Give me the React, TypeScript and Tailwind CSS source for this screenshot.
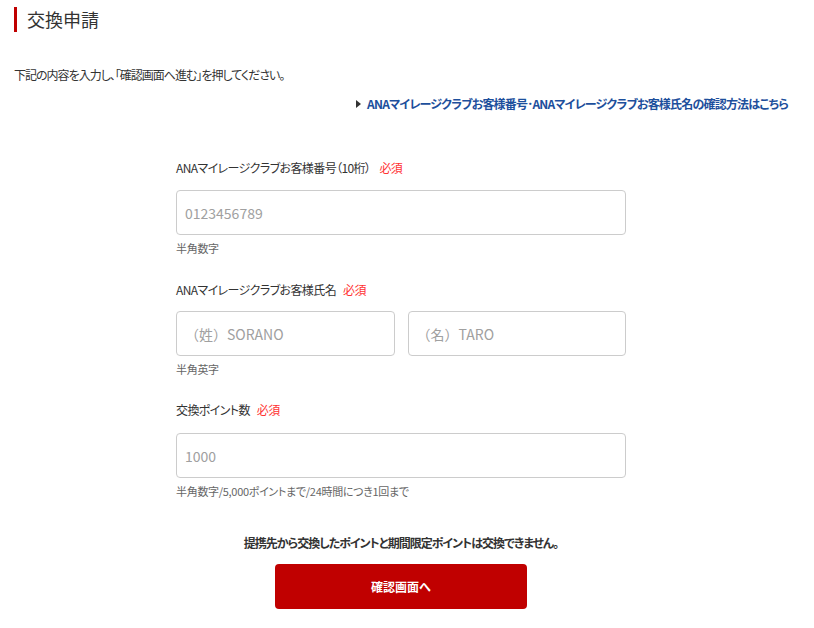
import React from 'react'

const font = "[font-family:'Noto_Sans_CJK_JP','Noto_Sans',sans-serif]"

function Label({ text }: { text: string }) {
  return (
    <div className="text-[12px] leading-[18px] tracking-[-0.6px] text-[#333] [font-feature-settings:'palt']">
      {text}
      <span className="ml-[7px] text-[#ff3333]">必須</span>
    </div>
  )
}

function Field({ placeholder, className = '' }: { placeholder: string; className?: string }) {
  return (
    <input
      type="text"
      placeholder={placeholder}
      className={`h-[45px] w-full rounded-[4px] border border-[#cccccc] bg-white px-2 text-[14px] text-[#333] outline-none placeholder:text-[#a0a0a0] ${className}`}
    />
  )
}

function Help({ text }: { text: string }) {
  return (
    <div className="mt-[5px] text-[11px] leading-[16px] tracking-[-0.3px] text-[#666] [font-feature-settings:'palt']">
      {text}
    </div>
  )
}

export default function App() {
  return (
    <div className={`min-h-screen bg-white pl-[14px] pr-[26px] pt-[7px] ${font}`}>
      <h1 className="flex h-[25px] items-center border-l-[3px] border-[#c00000] pl-[10px] text-[18px] font-normal leading-[25px] text-[#333]">
        交換申請
      </h1>

      <p className="mt-[34px] text-[12px] leading-[18px] tracking-[-1px] text-[#333] [font-feature-settings:'palt']">
        下記の内容を入力し、「確認画面へ進む」を押してください。
      </p>

      <div className="mt-[11px] flex justify-end">
        <a href="#" className="flex items-center gap-[6px] text-[12px] font-bold leading-[18px] tracking-[-0.8px] text-[#1d4f9c] [font-feature-settings:'palt']">
          <span className="inline-block h-0 w-0 border-y-[4px] border-l-[5px] border-y-transparent border-l-[#333]" />
          ANAマイレージクラブお客様番号･ANAマイレージクラブお客様氏名の確認方法はこちら
        </a>
      </div>

      <div className="mx-auto mt-[46px] w-[450px]">
        <Label text="ANAマイレージクラブお客様番号（10桁） " />
        <div className="mt-[13px]">
          <Field placeholder="0123456789" />
        </div>
        <Help text="半角数字" />

        <div className="mt-[25px]">
          <Label text="ANAマイレージクラブお客様氏名" />
        </div>
        <div className="mt-[12px] flex gap-[13px]">
          <Field placeholder="（姓）SORANO" />
          <Field placeholder="（名）TARO" />
        </div>
        <Help text="半角英字" />

        <div className="mt-[24px]">
          <Label text="交換ポイント数" />
        </div>
        <div className="mt-[14px]">
          <Field placeholder="1000" />
        </div>
        <Help text="半角数字/5,000ポイントまで/24時間につき1回まで" />
      </div>

      <p className="mt-[35px] text-center text-[12px] font-bold leading-[18px] tracking-[-1px] text-[#333] [font-feature-settings:'palt']">
        提携先から交換したポイントと期間限定ポイントは交換できません。
      </p>

      <div className="mt-[12px] flex justify-center">
        <button className="h-[45px] w-[252px] rounded-[4px] bg-[#c00000] text-[12px] font-bold text-white">
          確認画面へ
        </button>
      </div>
    </div>
  )
}
